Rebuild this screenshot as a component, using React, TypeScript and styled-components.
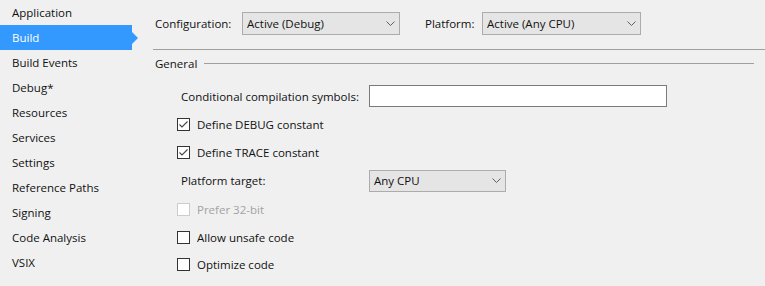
import React, { useState } from 'react';
import styled, { createGlobalStyle } from 'styled-components';

const GlobalStyle = createGlobalStyle`
  html, body {
    margin: 0;
    padding: 0;
    background: #f0f0f0;
  }
  body {
    font-family: "Open Sans", "Noto Sans", "Liberation Sans", sans-serif;
    font-size: 11.5px;
    color: #111111;
  }
`;

const Window = styled.div`
  display: flex;
  width: 765px;
  height: 286px;
  background: #f0f0f0;
  overflow: hidden;
`;

const Sidebar = styled.nav`
  display: flex;
  flex-direction: column;
  width: 138px;
  flex-shrink: 0;
`;

const NavItem = styled.div<{ $active?: boolean }>`
  position: relative;
  display: flex;
  align-items: center;
  width: 132px;
  height: 25px;
  padding-left: 12px;
  box-sizing: border-box;
  background: ${(p) => (p.$active ? '#3399ff' : 'transparent')};
  color: ${(p) => (p.$active ? '#ffffff' : '#111111')};
  white-space: nowrap;

  &::after {
    content: '';
    display: ${(p) => (p.$active ? 'block' : 'none')};
    position: absolute;
    right: -6px;
    top: 7px;
    border-top: 6px solid transparent;
    border-bottom: 6px solid transparent;
    border-left: 6px solid #3399ff;
  }
`;

const Main = styled.main`
  flex: 1;
  display: flex;
  flex-direction: column;
  padding-left: 15px;
`;

const TopBar = styled.div`
  display: flex;
  align-items: flex-start;
  height: 50px;
  padding-top: 12px;
  box-sizing: border-box;
  border-bottom: 1px solid #a0a0a0;
`;

const TopLabel = styled.span<{ $width: number; $gap?: number }>`
  width: ${(p) => p.$width}px;
  margin-left: ${(p) => p.$gap ?? 0}px;
  padding-left: 2px;
  box-sizing: border-box;
  height: 23px;
  line-height: 23px;
`;

const Select = styled.div<{ $width: number; $height?: number }>`
  display: flex;
  align-items: center;
  justify-content: space-between;
  width: ${(p) => p.$width}px;
  height: ${(p) => p.$height ?? 23}px;
  padding: 0 4px 0 4px;
  box-sizing: border-box;
  background: #e5e5e5;
  border: 1px solid #acacac;
  color: #111111;
`;

const SectionHeader = styled.div`
  display: flex;
  align-items: center;
  height: 26px;
  padding-left: 2px;
  padding-right: 11px;
  gap: 7px;
`;

const SectionRule = styled.div`
  flex: 1;
  height: 1px;
  background: #a0a0a0;
`;

const Form = styled.div`
  display: flex;
  flex-direction: column;
  padding-top: 6px;
`;

const Row = styled.div<{ $height?: number }>`
  display: flex;
  align-items: center;
  height: ${(p) => p.$height ?? 28}px;
  padding-left: 24px;
`;

const FieldLabel = styled.span`
  width: 192px;
  padding-left: 4px;
  box-sizing: border-box;
`;

const TextBox = styled.input`
  width: 298px;
  height: 22px;
  box-sizing: border-box;
  margin: 0;
  border: 1px solid #7a7a7a;
  background: #ffffff;
  font: inherit;
  padding: 0 3px;
  outline: none;
`;

const CheckLabel = styled.label<{ $disabled?: boolean }>`
  display: flex;
  align-items: center;
  gap: 7px;
  color: ${(p) => (p.$disabled ? '#a2a2a2' : '#111111')};
  cursor: default;
`;

const Box = styled.span<{ $disabled?: boolean }>`
  display: flex;
  align-items: center;
  justify-content: center;
  width: 13px;
  height: 13px;
  box-sizing: border-box;
  border: 1px solid ${(p) => (p.$disabled ? '#cccccc' : '#333333')};
  background: #ffffff;
`;

const Chevron = () => (
  <svg width="9" height="5" viewBox="0 0 9 5">
    <polyline points="0.5,0.5 4.5,4.5 8.5,0.5" fill="none" stroke="#606060" strokeWidth="1" />
  </svg>
);

const CheckMark = () => (
  <svg width="11" height="11" viewBox="0 0 11 11">
    <polyline points="1.5,5.5 4,8 9.5,2.5" fill="none" stroke="#444444" strokeWidth="1.1" />
  </svg>
);

type CheckProps = { label: string; checked?: boolean; disabled?: boolean };

const Check = ({ label, checked, disabled }: CheckProps) => (
  <CheckLabel $disabled={disabled}>
    <Box $disabled={disabled}>{checked && <CheckMark />}</Box>
    {label}
  </CheckLabel>
);

const navItems = [
  'Application',
  'Build',
  'Build Events',
  'Debug*',
  'Resources',
  'Services',
  'Settings',
  'Reference Paths',
  'Signing',
  'Code Analysis',
  'VSIX',
];

const App = () => {
  const [current] = useState('Build');

  return (
    <Window>
      <GlobalStyle />
      <Sidebar>
        {navItems.map((item) => (
          <NavItem key={item} $active={item === current}>
            {item}
          </NavItem>
        ))}
      </Sidebar>

      <Main>
        <TopBar>
          <TopLabel $width={89}>Configuration:</TopLabel>
          <Select $width={158}>
            <span>Active (Debug)</span>
            <Chevron />
          </Select>
          <TopLabel $width={59} $gap={23}>Platform:</TopLabel>
          <Select $width={159}>
            <span>Active (Any CPU)</span>
            <Chevron />
          </Select>
        </TopBar>

        <SectionHeader>
          <span>General</span>
          <SectionRule />
        </SectionHeader>

        <Form>
          <Row>
            <FieldLabel>Conditional compilation symbols:</FieldLabel>
            <TextBox defaultValue="" />
          </Row>
          <Row>
            <Check label="Define DEBUG constant" checked />
          </Row>
          <Row>
            <Check label="Define TRACE constant" checked />
          </Row>
          <Row $height={29}>
            <FieldLabel>Platform target:</FieldLabel>
            <Select $width={137} $height={22}>
              <span>Any CPU</span>
              <Chevron />
            </Select>
          </Row>
          <Row $height={29}>
            <Check label="Prefer 32-bit" disabled />
          </Row>
          <Row $height={27}>
            <Check label="Allow unsafe code" />
          </Row>
          <Row $height={27}>
            <Check label="Optimize code" />
          </Row>
        </Form>
      </Main>
    </Window>
  );
};

export default App;
